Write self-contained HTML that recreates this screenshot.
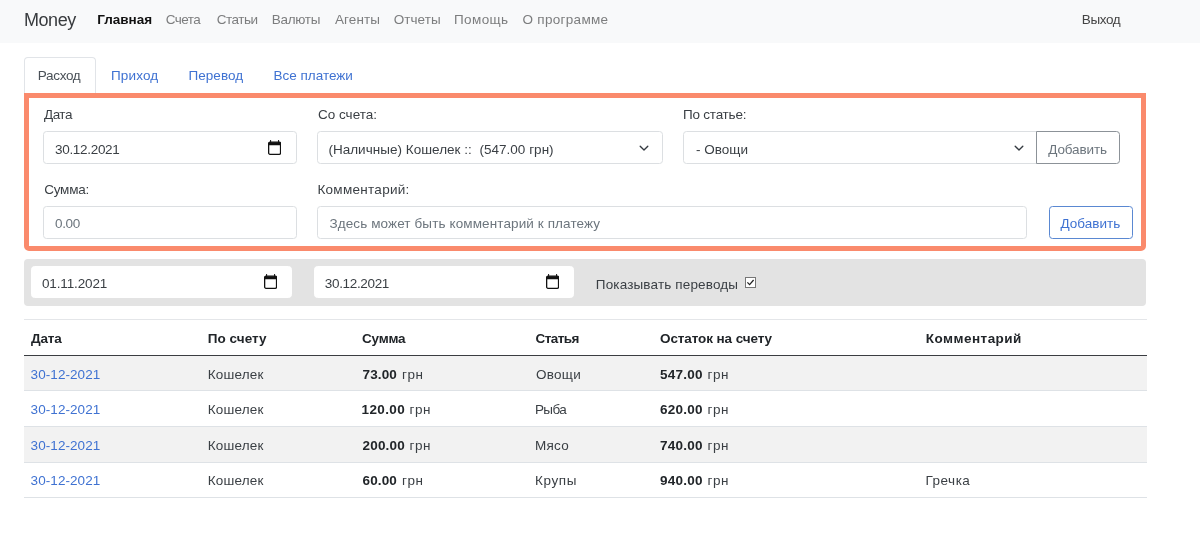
<!DOCTYPE html>
<html lang="ru"><head><meta charset="utf-8"><title>Money</title>
<style>
html,body{margin:0;padding:0}
body{width:1200px;height:545px;position:relative;overflow:hidden;background:#fff;font-family:'Liberation Sans',sans-serif}
.t{position:absolute;line-height:1;white-space:pre}
.b{position:absolute;box-sizing:border-box}
.cal{position:absolute;display:block}
.in{position:absolute;box-sizing:border-box;background:#fff;border:1px solid #dcdfe2;border-radius:3.5px}
</style></head><body>
<div class="b" style="left:0;top:0;width:1200px;height:42.5px;background:#f8f9fa"></div>
<!-- tab -->
<div class="b" style="left:23.7px;top:57px;width:72.3px;height:38px;border:1px solid #e1e4e8;border-bottom:none;border-radius:4px 4px 0 0;background:#fff"></div>
<!-- orange box -->
<div class="b" style="left:23.8px;top:93.2px;width:1122.6px;height:158.2px;border:5.4px solid #fa8a6c;border-radius:0 0 5px 5px;background:#fff"></div>
<!-- form row 1 -->
<div class="in" style="left:43.25px;top:131.2px;width:253.5px;height:33.1px"></div>
<div class="in" style="left:317.4px;top:131.2px;width:345.5px;height:33.1px"></div>
<div class="in" style="left:683.2px;top:131.2px;width:353.6px;height:33.1px;border-radius:3.5px 0 0 3.5px"></div>
<div class="in" style="left:1036px;top:131.2px;width:84px;height:33.1px;border-color:#8c9298;border-radius:0 3.5px 3.5px 0"></div>
<!-- form row 2 -->
<div class="in" style="left:43.25px;top:206px;width:253.5px;height:32.5px"></div>
<div class="in" style="left:317.4px;top:206px;width:710px;height:32.5px"></div>
<div class="in" style="left:1048.9px;top:206px;width:84.2px;height:32.6px;border-color:#5a88d2"></div>
<!-- filter bar -->
<div class="b" style="left:23.8px;top:258.8px;width:1122.6px;height:47px;background:#e3e3e3;border-radius:4px"></div>
<div class="in" style="left:30.75px;top:265.9px;width:261.6px;height:32.4px;border-color:#fff"></div>
<div class="in" style="left:313.8px;top:265.9px;width:260.4px;height:32.4px;border-color:#fff"></div>
<!-- checkbox -->
<div class="b" style="left:745px;top:277px;width:11px;height:11px;background:#fff;border:1px solid #767676"></div>
<svg class="cal" style="left:745px;top:277px" width="11" height="11" viewBox="0 0 11 11"><path d="M2.4 5.4 L4.6 7.6 L8.6 3" fill="none" stroke="#222" stroke-width="1.3"/></svg>
<!-- table -->
<div class="b" style="left:23.7px;top:319px;width:1123px;height:1.4px;background:#e4e6e9"></div>
<div class="b" style="left:23.7px;top:354.8px;width:1123px;height:1.2px;background:#3a3d41"></div>
<div class="b" style="left:23.7px;top:356.2px;width:1123px;height:34px;background:#f2f2f2"></div>
<div class="b" style="left:23.7px;top:390.2px;width:1123px;height:1px;background:#dee2e6"></div>
<div class="b" style="left:23.7px;top:425.7px;width:1123px;height:1px;background:#dee2e6"></div>
<div class="b" style="left:23.7px;top:426.7px;width:1123px;height:35px;background:#f2f2f2"></div>
<div class="b" style="left:23.7px;top:461.6px;width:1123px;height:1px;background:#dee2e6"></div>
<div class="b" style="left:23.7px;top:497.2px;width:1123px;height:1px;background:#dee2e6"></div>
<svg class="cal" style="left:267.9px;top:139.9px" width="13.2" height="15" viewBox="0 0 13.2 15"><rect x="0.65" y="2.2" width="11.9" height="12.1" rx="1.3" fill="none" stroke="#111" stroke-width="1.3"/><rect x="0.3" y="2.2" width="12.6" height="3" rx="0.8" fill="#111"/><rect x="2.1" y="0" width="1" height="3" fill="#111"/><rect x="10.1" y="0" width="1" height="3" fill="#111"/></svg>
<svg class="cal" style="left:264px;top:274.3px" width="13.2" height="15" viewBox="0 0 13.2 15"><rect x="0.65" y="2.2" width="11.9" height="12.1" rx="1.3" fill="none" stroke="#111" stroke-width="1.3"/><rect x="0.3" y="2.2" width="12.6" height="3" rx="0.8" fill="#111"/><rect x="2.1" y="0" width="1" height="3" fill="#111"/><rect x="10.1" y="0" width="1" height="3" fill="#111"/></svg>
<svg class="cal" style="left:545.8px;top:274.3px" width="13.2" height="15" viewBox="0 0 13.2 15"><rect x="0.65" y="2.2" width="11.9" height="12.1" rx="1.3" fill="none" stroke="#111" stroke-width="1.3"/><rect x="0.3" y="2.2" width="12.6" height="3" rx="0.8" fill="#111"/><rect x="2.1" y="0" width="1" height="3" fill="#111"/><rect x="10.1" y="0" width="1" height="3" fill="#111"/></svg>
<svg class="cal" style="left:639.4px;top:145px" width="10" height="7" viewBox="0 0 10 7"><path d="M1.2 1.2 L5 5 L8.8 1.2" fill="none" stroke="#343a40" stroke-width="1.35" stroke-linecap="round" stroke-linejoin="round"/></svg>
<svg class="cal" style="left:1014.3px;top:145px" width="10" height="7" viewBox="0 0 10 7"><path d="M1.2 1.2 L5 5 L8.8 1.2" fill="none" stroke="#343a40" stroke-width="1.35" stroke-linecap="round" stroke-linejoin="round"/></svg>
<div style="position:absolute;left:0;top:0;width:1200px;height:545px;will-change:transform">
<span class="t" style="left:23.90px;top:11.11px;font-size:18px;color:#383b3e;letter-spacing:-0.400px">Money</span>
<span class="t" style="left:97.20px;top:13.17px;font-size:13.5px;color:#111;letter-spacing:0.017px;font-weight:700">Главная</span>
<span class="t" style="left:165.80px;top:13.17px;font-size:13.5px;color:#7c7d7e;letter-spacing:-0.550px">Счета</span>
<span class="t" style="left:216.80px;top:13.17px;font-size:13.5px;color:#7c7d7e;letter-spacing:-0.500px">Статьи</span>
<span class="t" style="left:271.70px;top:13.17px;font-size:13.5px;color:#7c7d7e;letter-spacing:-0.280px">Валюты</span>
<span class="t" style="left:335.00px;top:13.17px;font-size:13.5px;color:#7c7d7e;letter-spacing:0.100px">Агенты</span>
<span class="t" style="left:393.75px;top:13.17px;font-size:13.5px;color:#7c7d7e;letter-spacing:0.050px">Отчеты</span>
<span class="t" style="left:454.00px;top:13.17px;font-size:13.5px;color:#7c7d7e;letter-spacing:0.400px">Помощь</span>
<span class="t" style="left:522.50px;top:13.17px;font-size:13.5px;color:#7c7d7e;letter-spacing:0.300px">О программе</span>
<span class="t" style="left:1081.75px;top:13.17px;font-size:13.5px;color:#444;letter-spacing:-0.375px">Выход</span>
<span class="t" style="left:37.75px;top:69.17px;font-size:13.5px;color:#495057;letter-spacing:-0.300px">Расход</span>
<span class="t" style="left:111.00px;top:69.17px;font-size:13.5px;color:#3f72d2;letter-spacing:0.150px">Приход</span>
<span class="t" style="left:188.50px;top:69.17px;font-size:13.5px;color:#3f72d2;letter-spacing:0.042px">Перевод</span>
<span class="t" style="left:273.50px;top:69.17px;font-size:13.5px;color:#3f72d2;letter-spacing:0.000px">Все платежи</span>
<span class="t" style="left:44.00px;top:107.92px;font-size:13.5px;color:#3a3f44;letter-spacing:-0.500px">Дата</span>
<span class="t" style="left:318.00px;top:107.92px;font-size:13.5px;color:#3a3f44;letter-spacing:0.000px">Со счета:</span>
<span class="t" style="left:683.00px;top:107.92px;font-size:13.5px;color:#3a3f44;letter-spacing:-0.222px">По статье:</span>
<span class="t" style="left:44.25px;top:183.42px;font-size:13.5px;color:#3a3f44;letter-spacing:-0.250px">Сумма:</span>
<span class="t" style="left:317.40px;top:183.42px;font-size:13.5px;color:#3a3f44;letter-spacing:0.291px">Комментарий:</span>
<span class="t" style="left:55.00px;top:142.92px;font-size:13.5px;color:#3a3f44;letter-spacing:-0.306px">30.12.2021</span>
<span class="t" style="left:328.40px;top:142.92px;font-size:13.5px;color:#3a3f44;letter-spacing:0.026px">(Наличные) Кошелек ::  (547.00 грн)</span>
<span class="t" style="left:696.00px;top:142.92px;font-size:13.5px;color:#3a3f44;letter-spacing:0.000px">- Овощи</span>
<span class="t" style="left:1048.20px;top:142.92px;font-size:13.5px;color:#6c757d;letter-spacing:-0.100px">Добавить</span>
<span class="t" style="left:55.00px;top:217.42px;font-size:13.5px;color:#6c757d;letter-spacing:-0.333px">0.00</span>
<span class="t" style="left:329.40px;top:217.42px;font-size:13.5px;color:#6c757d;letter-spacing:0.114px">Здесь может быть комментарий к платежу</span>
<span class="t" style="left:1060.40px;top:217.17px;font-size:13.5px;color:#3f72d2;letter-spacing:0.043px">Добавить</span>
<span class="t" style="left:42.00px;top:277.17px;font-size:13.5px;color:#3a3f44;letter-spacing:-0.139px">01.11.2021</span>
<span class="t" style="left:324.80px;top:277.17px;font-size:13.5px;color:#3a3f44;letter-spacing:-0.333px">30.12.2021</span>
<span class="t" style="left:595.80px;top:277.77px;font-size:13.5px;color:#3a3f44;letter-spacing:0.150px">Показывать переводы</span>
<span class="t" style="left:31.00px;top:332.42px;font-size:13.5px;color:#212529;letter-spacing:-0.133px;font-weight:700">Дата</span>
<span class="t" style="left:207.75px;top:332.42px;font-size:13.5px;color:#212529;letter-spacing:0.036px;font-weight:700">По счету</span>
<span class="t" style="left:362.00px;top:332.42px;font-size:13.5px;color:#212529;letter-spacing:-0.188px;font-weight:700">Сумма</span>
<span class="t" style="left:535.50px;top:332.42px;font-size:13.5px;color:#212529;letter-spacing:-0.550px;font-weight:700">Статья</span>
<span class="t" style="left:660.00px;top:332.42px;font-size:13.5px;color:#212529;letter-spacing:-0.100px;font-weight:700">Остаток на счету</span>
<span class="t" style="left:925.75px;top:332.42px;font-size:13.5px;color:#212529;letter-spacing:0.475px;font-weight:700">Комментарий</span>
<span class="t" style="left:30.60px;top:367.92px;font-size:13.5px;color:#3f72d2;letter-spacing:0.067px">30-12-2021</span>
<span class="t" style="left:207.75px;top:367.92px;font-size:13.5px;color:#3a3f44;letter-spacing:0.167px">Кошелек</span>
<span class="t" style="left:362.50px;top:367.92px;font-size:13.5px;color:#212529;letter-spacing:0.125px;font-weight:700">73.00</span>
<span class="t" style="left:401.90px;top:367.92px;font-size:13.5px;color:#3a3f44;letter-spacing:0.600px">грн</span>
<span class="t" style="left:536.00px;top:367.92px;font-size:13.5px;color:#3a3f44;letter-spacing:0.250px">Овощи</span>
<span class="t" style="left:660.00px;top:367.92px;font-size:13.5px;color:#212529;letter-spacing:0.260px;font-weight:700">547.00</span>
<span class="t" style="left:707.40px;top:367.92px;font-size:13.5px;color:#3a3f44;letter-spacing:0.600px">грн</span>
<span class="t" style="left:30.60px;top:403.42px;font-size:13.5px;color:#3f72d2;letter-spacing:0.067px">30-12-2021</span>
<span class="t" style="left:207.75px;top:403.42px;font-size:13.5px;color:#3a3f44;letter-spacing:0.167px">Кошелек</span>
<span class="t" style="left:361.50px;top:403.42px;font-size:13.5px;color:#212529;letter-spacing:0.400px;font-weight:700">120.00</span>
<span class="t" style="left:409.40px;top:403.42px;font-size:13.5px;color:#3a3f44;letter-spacing:0.600px">грн</span>
<span class="t" style="left:534.90px;top:403.42px;font-size:13.5px;color:#3a3f44;letter-spacing:-0.600px">Рыба</span>
<span class="t" style="left:660.00px;top:403.42px;font-size:13.5px;color:#212529;letter-spacing:0.260px;font-weight:700">620.00</span>
<span class="t" style="left:707.40px;top:403.42px;font-size:13.5px;color:#3a3f44;letter-spacing:0.600px">грн</span>
<span class="t" style="left:30.60px;top:438.92px;font-size:13.5px;color:#3f72d2;letter-spacing:0.067px">30-12-2021</span>
<span class="t" style="left:207.75px;top:438.92px;font-size:13.5px;color:#3a3f44;letter-spacing:0.167px">Кошелек</span>
<span class="t" style="left:362.50px;top:438.92px;font-size:13.5px;color:#212529;letter-spacing:0.200px;font-weight:700">200.00</span>
<span class="t" style="left:409.40px;top:438.92px;font-size:13.5px;color:#3a3f44;letter-spacing:0.600px">грн</span>
<span class="t" style="left:535.00px;top:438.92px;font-size:13.5px;color:#3a3f44;letter-spacing:0.250px">Мясо</span>
<span class="t" style="left:660.00px;top:438.92px;font-size:13.5px;color:#212529;letter-spacing:0.260px;font-weight:700">740.00</span>
<span class="t" style="left:707.40px;top:438.92px;font-size:13.5px;color:#3a3f44;letter-spacing:0.600px">грн</span>
<span class="t" style="left:30.60px;top:474.42px;font-size:13.5px;color:#3f72d2;letter-spacing:0.067px">30-12-2021</span>
<span class="t" style="left:207.75px;top:474.42px;font-size:13.5px;color:#3a3f44;letter-spacing:0.167px">Кошелек</span>
<span class="t" style="left:362.50px;top:474.42px;font-size:13.5px;color:#212529;letter-spacing:0.125px;font-weight:700">60.00</span>
<span class="t" style="left:401.90px;top:474.42px;font-size:13.5px;color:#3a3f44;letter-spacing:0.600px">грн</span>
<span class="t" style="left:535.05px;top:474.42px;font-size:13.5px;color:#3a3f44;letter-spacing:0.600px">Крупы</span>
<span class="t" style="left:660.00px;top:474.42px;font-size:13.5px;color:#212529;letter-spacing:0.260px;font-weight:700">940.00</span>
<span class="t" style="left:707.40px;top:474.42px;font-size:13.5px;color:#3a3f44;letter-spacing:0.600px">грн</span>
<span class="t" style="left:925.50px;top:474.42px;font-size:13.5px;color:#3a3f44;letter-spacing:0.500px">Гречка</span>
</div>
</body></html>
